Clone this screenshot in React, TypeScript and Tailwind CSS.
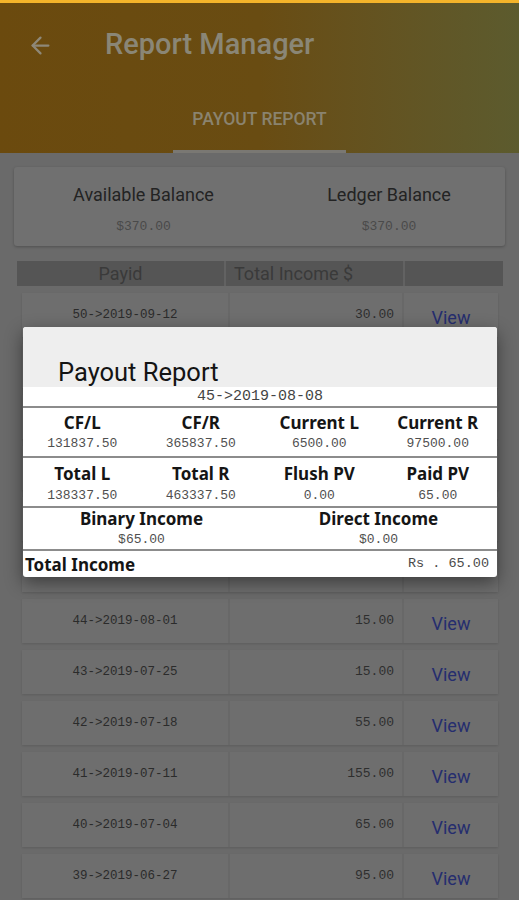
import React from 'react';
import { ArrowLeft } from 'lucide-react';

// rows 49..45 sit behind the dialog, so they are drawn without text
const rows = [
  { id: '50->2019-09-12', amount: '30.00', hidden: false },
  { id: '49', amount: '', hidden: true },
  { id: '48', amount: '', hidden: true },
  { id: '47', amount: '', hidden: true },
  { id: '46', amount: '', hidden: true },
  { id: '45', amount: '', hidden: true },
  { id: '44->2019-08-01', amount: '15.00', hidden: false },
  { id: '43->2019-07-25', amount: '15.00', hidden: false },
  { id: '42->2019-07-18', amount: '55.00', hidden: false },
  { id: '41->2019-07-11', amount: '155.00', hidden: false },
  { id: '40->2019-07-04', amount: '65.00', hidden: false },
  { id: '39->2019-06-27', amount: '95.00', hidden: false },
];

const digital = "font-['Liberation_Mono','DejaVu_Sans_Mono',monospace]";
const boldLabel = "font-['Noto_Sans',sans-serif] text-[17px] font-bold text-[#151515] leading-[20px]";
const statValue = `${digital} text-[13px] text-[#4f4f4f] leading-[18px] mt-[2px]`;

const stats = [
  [
    { label: 'CF/L', value: '131837.50' },
    { label: 'CF/R', value: '365837.50' },
    { label: 'Current L', value: '6500.00' },
    { label: 'Current R', value: '97500.00' },
  ],
  [
    { label: 'Total L', value: '138337.50' },
    { label: 'Total R', value: '463337.50' },
    { label: 'Flush PV', value: '0.00' },
    { label: 'Paid PV', value: '65.00' },
  ],
];

export default function App() {
  return (
    <div className="relative w-[519px] h-[900px] overflow-hidden bg-[#6a6a6a] font-['Roboto',sans-serif]">
      {/* status strip */}
      <div className="h-[3px] bg-[#f4b42a]" />

      {/* App bar, dimmed by the dialog backdrop */}
      <header className="h-[150px] bg-gradient-to-r from-[#6b4a0e] via-[#694c12] to-[#5c5b2e]">
        <div className="flex items-center h-[84px] pl-[27px]">
          <ArrowLeft size={27} strokeWidth={2} className="text-[#8e8878]" />
          <h1 className="ml-[51px] text-[29px] font-medium text-[#8a8676]">Report Manager</h1>
        </div>
        <div className="flex justify-center">
          <div className="w-[173px] h-[66px] flex flex-col items-center">
            <div className="flex-1 flex items-center pt-[2px] text-[17.5px] font-medium text-[#8a836f]">PAYOUT REPORT</div>
            <div className="w-full h-[3px] bg-[#7a7873]" />
          </div>
        </div>
      </header>

      {/* Balance card */}
      <div className="mx-[14px] mt-[14px] h-[79px] bg-[#707070] rounded-[3px] shadow-[0_1px_3px_rgba(0,0,0,0.25)] flex">
        <div className="w-[259px] flex flex-col items-center pt-[17px]">
          <div className="text-[18px] text-[#232323] leading-[22px]">Available Balance</div>
          <div className={`${digital} text-[13px] text-[#4a4a4a] mt-[11px]`}>$370.00</div>
        </div>
        <div className="flex-1 flex flex-col items-center pt-[17px]">
          <div className="text-[18px] text-[#232323] leading-[22px]">Ledger Balance</div>
          <div className={`${digital} text-[13px] text-[#4a4a4a] mt-[11px]`}>$370.00</div>
        </div>
      </div>

      {/* Table header */}
      <div className="mx-[17px] mt-[15px] w-[486px] h-[25px] flex gap-[2px] bg-[#626262]">
        <div className="w-[207px] bg-[#555555] flex items-center justify-center text-[18px] text-[#3a3a3a]">Payid</div>
        <div className="w-[177px] bg-[#555555] flex items-center pl-[8px] text-[18px] text-[#3a3a3a]">Total Income $</div>
        <div className="flex-1 bg-[#555555]" />
      </div>

      {/* Rows */}
      <div className="mt-[7px] mx-[22px] w-[476px] flex flex-col gap-[7px]">
        {rows.map((r) => (
          <div key={r.id} className="h-[44px] flex gap-[2px] bg-[#686868] shadow-[0_1px_2px_rgba(0,0,0,0.12)]">
            <div className={`w-[206px] bg-[#6e6e6e] flex items-center justify-center ${digital} text-[12.5px] text-[#2b2b2b]`}>
              {!r.hidden && r.id}
            </div>
            <div className={`w-[172px] bg-[#6e6e6e] flex items-center justify-end pr-[8px] ${digital} text-[13px] text-[#2e2e2e]`}>
              {r.amount}
            </div>
            <div className="flex-1 bg-[#6e6e6e] flex items-center justify-center pt-[4px] text-[18px] text-[#252d6e]">
              {!r.hidden && 'View'}
            </div>
          </div>
        ))}
      </div>

      {/* Payout report dialog */}
      <div className="absolute left-[23px] top-[327px] w-[474px] h-[250px] rounded-[3px] overflow-hidden bg-white shadow-[0_6px_18px_rgba(0,0,0,0.45)]">
        <div className="h-[60px] bg-[#eeeeee] flex items-end pl-[35px]">
          <h2 className="text-[25.5px] text-[#141414] leading-[30px]">Payout Report</h2>
        </div>
        <div className={`h-[19px] flex items-center justify-center ${digital} text-[15px] leading-[19px] text-[#444444]`}>
          45-&gt;2019-08-08
        </div>
        <div className="h-[2px] bg-[#8c8c8c]" />
        <div className="h-[48px] grid grid-cols-4">
          {stats[0].map((s) => (
            <div key={s.label} className="flex flex-col items-center pt-[5px]">
              <div className={boldLabel}>{s.label}</div>
              <div className={statValue}>{s.value}</div>
            </div>
          ))}
        </div>
        <div className="h-[2px] bg-[#8c8c8c]" />
        <div className="h-[48px] grid grid-cols-4">
          {stats[1].map((s) => (
            <div key={s.label} className="flex flex-col items-center pt-[6px]">
              <div className={boldLabel}>{s.label}</div>
              <div className={`${statValue} mt-[3px]`}>{s.value}</div>
            </div>
          ))}
        </div>
        <div className="h-[2px] bg-[#8c8c8c]" />
        <div className="h-[41px] grid grid-cols-2">
          <div className="flex flex-col items-center pt-[1px]">
            <div className={boldLabel}>Binary Income</div>
            <div className={statValue}>$65.00</div>
          </div>
          <div className="flex flex-col items-center pt-[1px]">
            <div className={boldLabel}>Direct Income</div>
            <div className={statValue}>$0.00</div>
          </div>
        </div>
        <div className="h-[2px] bg-[#8c8c8c]" />
        <div className="h-[27px] flex items-center justify-between pl-[2px] pr-[8px]">
          <div className={boldLabel}>Total Income</div>
          <div className={`${digital} text-[13.5px] text-[#4a4a4a]`}>Rs . 65.00</div>
        </div>
      </div>
    </div>
  );
}
